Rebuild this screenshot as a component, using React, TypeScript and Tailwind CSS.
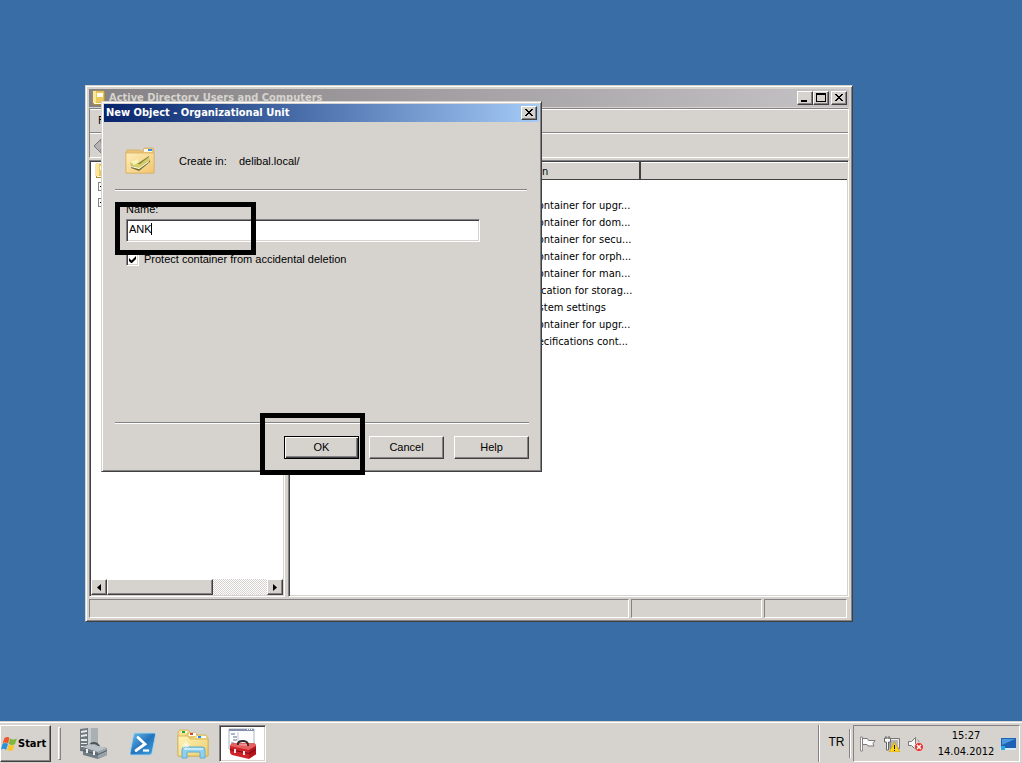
import { useState } from 'react'
import type { ReactNode } from 'react'

const RAISED =
  'bg-[#d6d3ce] border border-t-white border-l-white border-r-[#404040] border-b-[#404040] shadow-[inset_-1px_-1px_0_#848284]'
const RAISED_DEFAULT =
  'bg-[#d6d3ce] border border-black shadow-[inset_1px_1px_0_#fff,inset_-1px_-1px_0_#404040,inset_-2px_-2px_0_#848284]'
const WINDOW_FRAME =
  'bg-[#d6d3ce] border border-t-[#d6d3ce] border-l-[#d6d3ce] border-r-[#404040] border-b-[#404040] shadow-[inset_1px_1px_0_#fff,inset_-1px_-1px_0_#848284]'
const SUNKEN =
  'border border-t-[#848284] border-l-[#848284] border-r-white border-b-white shadow-[inset_1px_1px_0_#404040,inset_-1px_-1px_0_#d6d3ce]'
const THIN_SUNKEN = 'border border-t-[#848284] border-l-[#848284] border-r-white border-b-white'

const descriptions = [
  '',
  'Default container for upgr...',
  'Default container for dom...',
  'Default container for secu...',
  'Default container for orph...',
  'Default container for man...',
  'Default location for storag...',
  'Builtin system settings',
  'Default container for upgr...',
  'Quota specifications cont...',
]

function CaptionButton({ label, children }: { label: string; children: ReactNode }) {
  return (
    <button type="button" aria-label={label} className={`w-4 h-[14px] flex items-center justify-center ${RAISED}`}>
      <svg className="w-[14px] h-3" viewBox="0 0 14 12" shapeRendering="crispEdges">
        {children}
      </svg>
    </button>
  )
}

function CloseGlyph() {
  return (
    <path
      fill="#000"
      d="M3 2h2v1h-2zM9 2h2v1h-2zM4 3h2v1h-2zM8 3h2v1h-2zM5 4h4v1h-4zM6 5h2v1h-2zM5 6h4v1h-4zM4 7h2v1h-2zM8 7h2v1h-2zM3 8h2v1h-2zM9 8h2v1h-2z"
    />
  )
}

function BookIcon() {
  return (
    <svg className="w-4 h-4 shrink-0" viewBox="0 0 16 16">
      <path d="M1 2h12v13H1z" fill="#b08d35" />
      <path d="M1 1h11v12H1z" fill="#ecc95e" stroke="#c9a645" strokeWidth=".6" />
      <path d="M1 1h3v12H1z" fill="#fbe79a" />
      <path d="M5 3h6v4H5z" fill="#fffdf0" />
      <path d="M2 13h10v1H2z" fill="#fffbe0" />
    </svg>
  )
}

function OuIcon() {
  return (
    <svg className="w-8 h-8" viewBox="0 0 32 32">
      <defs>
        <linearGradient id="ouFolder" x1="0" y1="0" x2="1" y2="1">
          <stop offset="0" stopColor="#fdeebb" />
          <stop offset="1" stopColor="#f2c56f" />
        </linearGradient>
      </defs>
      <path d="M2 7l1-2h12l2 1h2l1-3h9l1 3v22H2z" fill="#ebc377" stroke="#d6ac62" strokeWidth=".8" />
      <path d="M20 4h8v3h-8z" fill="#fff8e2" />
      <path d="M24 4h4v2h-4z" fill="#3f8fdd" />
      <path d="M2 8h28v20H2z" fill="url(#ouFolder)" stroke="#dcb266" strokeWidth=".8" />
      <path d="M7 20l8 3 11-8v2l-11 9-8-3z" fill="#75713a" />
      <path d="M6 18l7-3 4 2 8-6 1 4-11 9-9-4z" fill="#d6ce6c" />
      <path d="M7 17l6-3 3 3-6 3z" fill="#f7f3b4" />
      <path d="M13 19l12-8v1l-9 7z" fill="#8a8440" />
      <path d="M7 21l8 2 10-7v1l-10 7-8-2z" fill="#fffde6" />
    </svg>
  )
}

function WindowsFlag() {
  return (
    <svg className="w-4 h-4 shrink-0" viewBox="0 0 16 16">
      <path d="M3.500 2q3-2 5 0L7 7.500Q4 5.500 1.500 7.500z" fill="#ee562b" />
      <path d="M9 2.500q3 2 7 0l-2 5.500q-3 2-6.500 0z" fill="#7fb83d" />
      <path d="M1.500 8q3-2 5.500 0l-2 6q-2-2-5-.5z" fill="#2a91da" />
      <path d="M7.500 8.500q3 2 6 0L12 14q-3 2-6 0z" fill="#f9c52e" />
    </svg>
  )
}

function ServerManagerIcon() {
  return (
    <svg className="w-8 h-8" viewBox="0 0 32 32">
      <path d="M3 1l8-1v24l-8-1z" fill="#70787d" />
      <path d="M11 0h10v24H11z" fill="#aab0b4" />
      <path d="M11 0h3v24h-3z" fill="#c5cbce" />
      <path d="M4 3l6-1v2l-6 1zM4 7l6-1v2l-6 1zM4 11h6v2H4zM4 15h6v1H4zM4 18h6v1H4z" fill="#e6ebed" />
      <path d="M13 19v-2q1-2 4-2t5 3v2" fill="none" stroke="#4c5458" strokeWidth="1.8" />
      <path d="M6 19l6-2 18 3v7l-9 4-15-4z" fill="#727d83" />
      <path d="M6 19l7-3 17 4-9 4z" fill="#b9c2c7" />
      <path d="M21 24l9-4v7l-9 4z" fill="#98a4aa" />
      <path d="M6 22l15 4 9-4v1l-9 4-15-4z" fill="#50595e" />
      <path d="M9 21h2v4H9zM16 23h2v4h-2z" fill="#edf1f3" />
    </svg>
  )
}

function PowerShellIcon() {
  return (
    <svg className="w-8 h-8" viewBox="0 0 32 32">
      <defs>
        <linearGradient id="psFill" x1="0" y1="0" x2="1" y2="1">
          <stop offset="0" stopColor="#6fc0ea" />
          <stop offset=".5" stopColor="#2474bd" />
          <stop offset="1" stopColor="#3ea2dc" />
        </linearGradient>
      </defs>
      <path
        d="M8.500 5H27q2 0 1.500 2L25 25q-.5 2-2.500 2H4.500q-2 0-1.500-2L6.500 7q.5-2 2-2z"
        fill="url(#psFill)"
        stroke="#a6d4ee"
      />
      <path d="M11 9.500l7 6.500-9 6.500" fill="none" stroke="#fff" strokeWidth="2.800" strokeLinecap="round" />
      <path d="M16 22.500h6" stroke="#fff" strokeWidth="2.200" />
    </svg>
  )
}

function ExplorerIcon() {
  return (
    <svg className="w-8 h-8" viewBox="0 0 32 32">
      <defs>
        <linearGradient id="exFront" x1="0" y1="0" x2="1" y2="1">
          <stop offset="0" stopColor="#fff4b8" />
          <stop offset="1" stopColor="#ebcd6c" />
        </linearGradient>
      </defs>
      <path d="M1 28V4l2-2h8l2 2v24z" fill="#f6e08d" stroke="#cfae50" strokeWidth=".8" />
      <path d="M4 28V9l5-1 2-3h8l2 2v21z" fill="#f3da80" stroke="#cfae50" strokeWidth=".8" />
      <path d="M8 28V9h9l2-2h10l2 3v18z" fill="#f3dd8d" stroke="#cfae50" strokeWidth=".8" />
      <path d="M4 3h6v2H4zM12 5h7v3h-7zM20 8h9v2h-9z" fill="#fff" />
      <path d="M5 3h3v2H5z" fill="#1daf27" />
      <path d="M13 5h3v2h-3z" fill="#d84221" />
      <path d="M21 8h3v2h-3z" fill="#238ce0" />
      <path d="M1 8h10l2 3h18v17H1z" fill="url(#exFront)" stroke="#d3af50" strokeWidth=".8" />
      <path d="M5 30v-8q0-3 3-3h17q3 0 3 3v8h-5v-5q0-1-1-1H11q-1 0-1 1v5z" fill="#8fd0ee" stroke="#64add2" />
      <path d="M7 21h19" stroke="#d9f3ff" strokeWidth="1.500" />
      <path d="M9 13v8M5 17h8M6.500 14.500l5 5M11.500 14.500l-5 5" stroke="#fff" strokeWidth=".8" />
    </svg>
  )
}

function ToolboxIcon() {
  return (
    <svg className="w-8 h-8" viewBox="0 0 32 32">
      <path d="M2 1h25v20H2z" fill="#fbfcfd" stroke="#aeb5c3" />
      <path d="M2 1h25v2H2z" fill="#8490ab" />
      <path d="M20 1h1v1h-1zM22 1h1v1h-1zM24 1h1v1h-1z" fill="#fff" />
      <path d="M4 6h4M6 9h4M6 12h4M4 15h3" stroke="#68718b" />
      <path d="M11 4v11" stroke="#c5cad5" />
      <path d="M3 18q1-3 5-3h17q4 0 4 3v8q0 1-1 1l-6 4-17-4q-2-1-2-3z" fill="#cf222a" />
      <path d="M3 18q1-3 5-3h17q4 0 4 3l-7 4z" fill="#e5605f" />
      <path d="M12 16h11l-3 2-10-1z" fill="#f19290" />
      <path d="M22 22l7-4v8l-7 4z" fill="#b2141e" />
      <path d="M3 21l19 4 7-4v1l-7 4-19-4z" fill="#7d0912" />
      <path d="M11 17v-2q1-2 5-2t5 3v2" fill="none" stroke="#33282b" strokeWidth="1.800" />
      <path d="M7 21h2v4H7zM16 23h2v4h-2z" fill="#f6e3e3" />
    </svg>
  )
}

function TrayIcons() {
  return (
    <div className="flex items-center gap-2">
      <svg className="w-4 h-4" viewBox="0 0 16 16">
        <path d="M.5 1h2v14h-2z" fill="#fff" stroke="#777" strokeWidth=".8" />
        <path d="M2.500 2.500h5l1 2h6.500l-2 3 1 2.500H8L7 8.500H2.500z" fill="#fafafa" stroke="#7b7b7b" />
      </svg>
      <svg className="w-4 h-4" viewBox="0 0 16 16">
        <path d="M6 2.500h9.500v10H6z" fill="#b5b5b5" stroke="#777" />
        <path d="M7 3.500h7.500v8" fill="none" stroke="#eee" />
        <path d="M.5 2h6v4h-2v8h-2V6h-2z" fill="#fff" stroke="#666" />
        <path d="M2 0v3M5 0v3" stroke="#666" />
        <path d="M10.500 6l5.500 10H5z" fill="#ffd51e" stroke="#c99f10" strokeWidth=".7" />
        <path d="M10 9h1v4h-1zM10 14h1v1h-1z" fill="#111" />
      </svg>
      <svg className="w-4 h-4" viewBox="0 0 16 16">
        <path d="M.5 5.500h3l4-4v12l-4-4h-3z" fill="#f6f6f6" stroke="#777" />
        <path d="M9.500 3.500q2 1 1.500 4" fill="none" stroke="#999" />
        <circle cx="11" cy="11" r="4.500" fill="#e03830" stroke="#fff" strokeWidth=".6" />
        <path d="M9 9l4 4M13 9l-4 4" stroke="#fff" strokeWidth="1.500" />
      </svg>
    </div>
  )
}

function TreeExpander() {
  return (
    <div className="w-[9px] h-[9px] flex items-center justify-center border border-[#848284]">
      <div className="w-[5px] h-px bg-black" />
    </div>
  )
}

function ConsoleWindow() {
  return (
    <section className={`absolute left-[85px] top-[85px] w-[768px] h-[537px] p-[3px] flex flex-col ${WINDOW_FRAME}`}>
      <header className="h-[18px] shrink-0 flex items-center pl-[3px] pr-[2px] bg-linear-to-r from-[#848284] to-[#c6c3c6]">
        <BookIcon />
        <h2 className="flex-1 pl-px font-bold text-[11px] text-[#d6d3ce] whitespace-nowrap">
          Active Directory Users and Computers
        </h2>
        <CaptionButton label="Minimize">
          <path d="M3 8h6v2H3z" />
        </CaptionButton>
        <CaptionButton label="Maximize">
          <path d="M2 1h10v9H2zM3 3v6h8V3z" fillRule="evenodd" />
        </CaptionButton>
        <div className="w-[2px]" />
        <CaptionButton label="Close">
          <CloseGlyph />
        </CaptionButton>
      </header>

      <div className={`mt-px h-[50px] shrink-0 flex flex-col ${THIN_SUNKEN}`}>
        <nav className="h-6 flex items-center px-2 border-t border-t-white border-b border-b-[#848284]">
          <button type="button">File</button>
        </nav>
        <div className="flex-1 flex items-center px-[3px] border-t border-white">
          <svg className="w-4 h-4" viewBox="0 0 16 16">
            <path d="M8 1v4h7v6H8v4L1 8z" fill="#b5b2b5" stroke="#777" />
          </svg>
        </div>
      </div>

      <div className="mt-[2px] flex-1 min-h-0 flex gap-[3px]">
        <div className={`w-[196px] p-px flex flex-col bg-white ${SUNKEN}`}>
          <div className="flex-1 px-1 pt-px">
            <BookIcon />
            <div className="mt-[3px] ml-[3px] space-y-[7px]">
              <TreeExpander />
              <TreeExpander />
            </div>
          </div>
          <div className="h-4 flex bg-[repeating-conic-gradient(#fff_0_25%,#d6d3ce_0_50%)] bg-[length:2px_2px]">
            <button type="button" aria-label="Scroll left" className={`w-4 flex items-center justify-center ${RAISED}`}>
              <svg className="w-[5px] h-[7px]" viewBox="0 0 5 7">
                <path d="M4 0v7L0 3.500z" />
              </svg>
            </button>
            <div className={`w-[106px] ${RAISED}`} />
            <div className="flex-1" />
            <button type="button" aria-label="Scroll right" className={`w-4 flex items-center justify-center ${RAISED}`}>
              <svg className="w-[5px] h-[7px]" viewBox="0 0 5 7">
                <path d="M0 0v7l4-3.500z" />
              </svg>
            </button>
          </div>
        </div>

        <div className={`flex-1 p-px bg-white ${SUNKEN}`}>
          <table className="w-full table-fixed border-collapse text-left">
            <thead>
              <tr className="h-[17px] bg-[#d6d3ce]">
                <th className="w-[196px] border-t border-t-white border-b border-b-[#404040]" />
                <th className="w-[154px] p-0 pl-[6px] font-normal leading-[15px] border-t border-t-white border-b border-b-[#404040] border-r-2 border-r-[#404040]">
                  Description
                </th>
                <th className="border-t border-t-white border-b border-b-[#404040]" />
              </tr>
            </thead>
            <tbody>
              {descriptions.map((text, i) => (
                <tr key={i} className="h-[17px]">
                  <td className="p-0" />
                  <td className="p-0 pl-[7px] leading-[17px] whitespace-nowrap">{text}</td>
                  <td className="p-0" />
                </tr>
              ))}
            </tbody>
          </table>
        </div>
      </div>

      <footer className="mt-[2px] h-[19px] shrink-0 flex gap-[2px] pr-[2px]">
        <div className={`flex-1 ${THIN_SUNKEN}`} />
        <div className={`w-[131px] ${THIN_SUNKEN}`} />
        <div className={`w-[83px] ${THIN_SUNKEN}`} />
      </footer>
    </section>
  )
}

function NewObjectDialog() {
  const [name, setName] = useState('ANK')
  const [isProtected, setIsProtected] = useState(true)

  return (
    <form
      onSubmit={(e) => e.preventDefault()}
      className={`absolute left-[101px] top-[101px] w-[441px] h-[371px] p-[2px] flex flex-col font-['Liberation_Sans',sans-serif] ${WINDOW_FRAME}`}
    >
      <header className="h-[18px] shrink-0 flex items-center pl-[2px] pr-[2px] bg-linear-to-r from-[#08246b] to-[#a5cbf7]">
        <h2 className="flex-1 font-bold text-[11px] text-white font-['DejaVu_Sans_Condensed','DejaVu_Sans',sans-serif]">
          New Object - Organizational Unit
        </h2>
        <CaptionButton label="Close">
          <CloseGlyph />
        </CaptionButton>
      </header>

      <div className="flex-1 flex flex-col pl-[11px] pr-[10px] pb-[10px]">
        <div className="h-[67px] flex items-center pt-[10px] pl-[9px]">
          <OuIcon />
          <span className="ml-[23px] w-[60px]">Create in:</span>
          <span>delibal.local/</span>
        </div>
        <hr className="mr-[2px] border-t-[#848284] border-b border-b-white" />

        <div className="pt-[10px] pl-[11px]">
          <label htmlFor="ou-name" className="block h-[18px] leading-4">
            Name:
          </label>
          <div className="relative w-[354px]">
            <input
              id="ou-name"
              value={name}
              onChange={(e) => setName(e.target.value)}
              className={`block w-full h-[23px] pl-[2px] pb-[3px] bg-white outline-none ${SUNKEN}`}
            />
            <span className="absolute left-[25px] top-1 w-px h-3 bg-black" />
          </div>
          <label className="mt-[9px] flex items-center gap-1 h-4">
            <input
              type="checkbox"
              checked={isProtected}
              onChange={(e) => setIsProtected(e.target.checked)}
              className={`peer appearance-none w-[13px] h-[13px] bg-white ${SUNKEN}`}
            />
            <svg className="hidden peer-checked:block -ml-[14px] mr-[4px] w-[7px] h-[7px]" viewBox="0 0 7 7">
              <path d="M0 2v3l2 2h1l4-4V0L2.500 4.500z" />
            </svg>
            <span>Protect container from accidental deletion</span>
          </label>
        </div>

        <div className="flex-1" />
        <hr className="mb-3 border-t-[#848284] border-b border-b-white" />
        <div className="flex justify-end gap-[10px]">
          <button type="submit" className={`w-[75px] h-[23px] pb-px ${RAISED_DEFAULT}`}>
            OK
          </button>
          <button type="button" className={`w-[75px] h-[23px] pb-px ${RAISED}`}>
            Cancel
          </button>
          <button type="button" className={`w-[75px] h-[23px] pb-px ${RAISED}`}>
            Help
          </button>
        </div>
      </div>
    </form>
  )
}

function Taskbar() {
  return (
    <footer className="h-[42px] shrink-0 flex items-stretch bg-[#d6d3ce] border-t border-[#d6d3ce] shadow-[inset_0_1px_0_#fff] pt-[3px] pb-px pr-[2px]">
      <button type="button" className={`w-[51px] flex items-center gap-px font-bold text-[11px] ${RAISED}`}>
        <WindowsFlag />
        Start
      </button>
      <div className="ml-[7px] my-[2px] w-[3px] border border-t-white border-l-white border-r-[#848284] border-b-[#848284]" />
      <div className="ml-4 flex items-center gap-[18px]">
        <button type="button" aria-label="Server Manager">
          <ServerManagerIcon />
        </button>
        <button type="button" aria-label="PowerShell">
          <PowerShellIcon />
        </button>
        <button type="button" aria-label="Explorer">
          <ExplorerIcon />
        </button>
      </div>
      <button
        type="button"
        aria-label="Active Directory Users and Computers"
        className={`ml-[10px] w-[47px] flex items-center justify-center bg-white ${SUNKEN}`}
      >
        <ToolboxIcon />
      </button>
      <div className="flex-1" />
      <div className="w-[2px] border-l border-l-[#848284] border-r border-r-white" />
      <span className="w-[29px] pl-1 pb-1 flex items-center justify-center text-[12px] font-['Liberation_Sans',sans-serif]">
        TR
      </span>
      <div className="my-1 w-[2px] border-l border-l-[#848284] border-r border-r-white" />
      <div className={`ml-[2px] w-[167px] pl-[6px] flex items-center ${THIN_SUNKEN}`}>
        <TrayIcons />
        <time className="w-[84px] text-center leading-4">
          15:27
          <br />
          14.04.2012
        </time>
        <svg className="-ml-2 w-4 h-4" viewBox="0 0 16 16">
          <path d="M1 2h15v10H1z" fill="#1d62b5" />
          <path d="M2 3h13L2 9z" fill="#4a98df" />
          <path d="M0 12h16v2H0z" fill="#d8ecf8" />
          <path d="M1 10h4v4H1z" fill="#2aa8e8" />
        </svg>
      </div>
    </footer>
  )
}

export default function App() {
  return (
    <div className="min-h-screen flex flex-col bg-[#396da5] text-black text-[11px] leading-4 font-['DejaVu_Sans_Condensed','DejaVu_Sans',sans-serif]">
      <main className="relative flex-1 overflow-hidden">
        <ConsoleWindow />
        <NewObjectDialog />
        {/* Highlights for the name field and the OK button */}
        <div className="absolute left-[115px] top-[202px] w-[141px] h-[53px] border-[5px] border-black pointer-events-none" />
        <div className="absolute left-[260px] top-[413px] w-[105px] h-[62px] border-[5px] border-black pointer-events-none" />
      </main>
      <Taskbar />
    </div>
  )
}
